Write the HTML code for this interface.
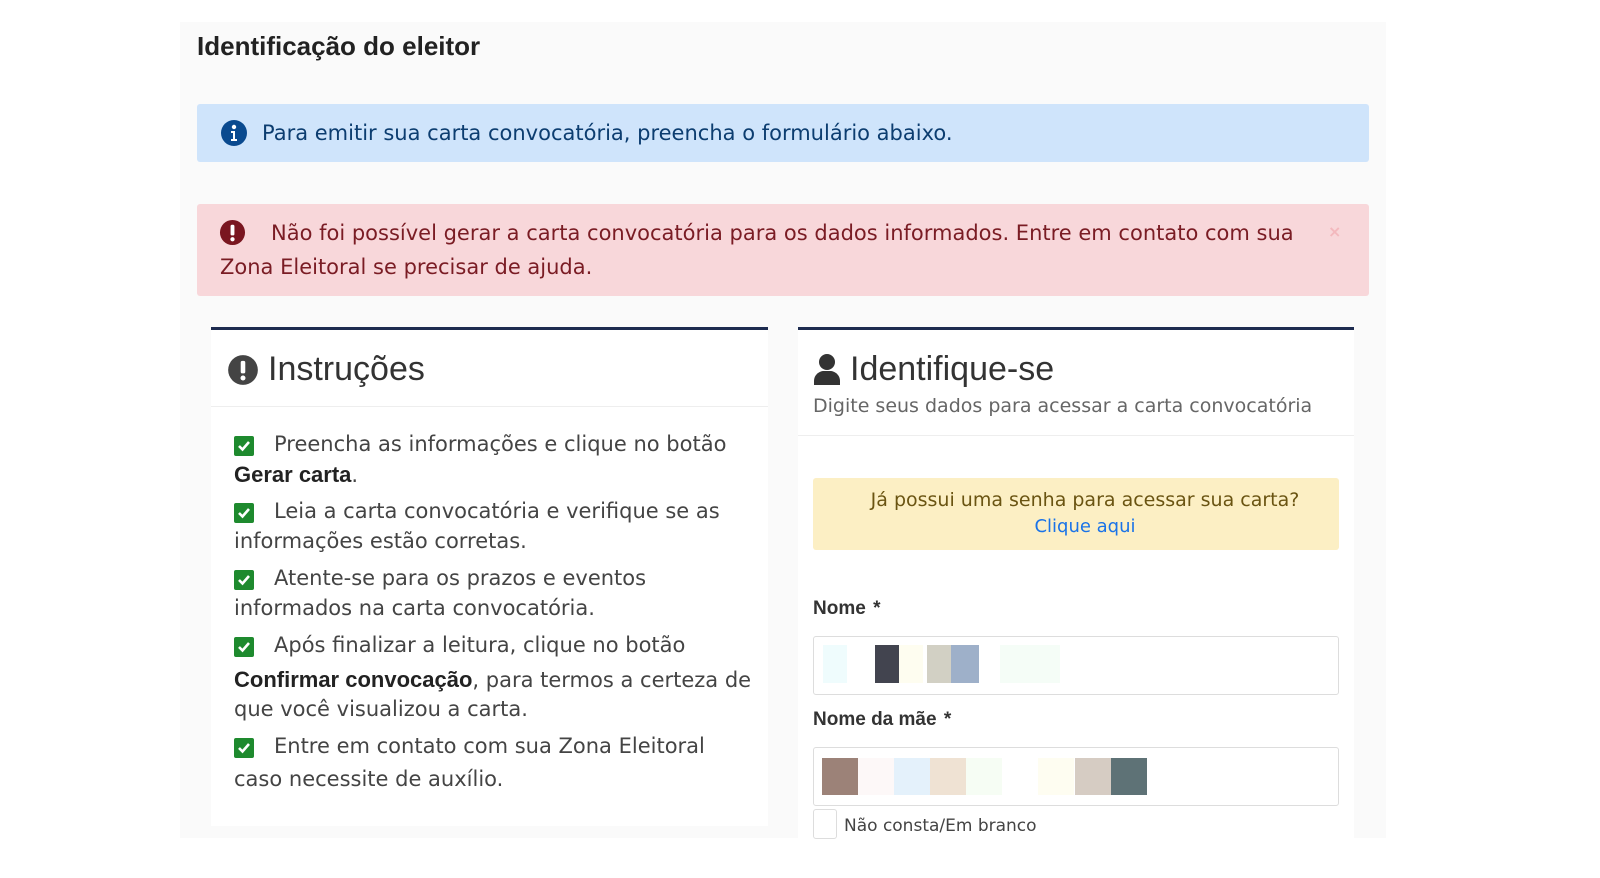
<!DOCTYPE html>
<html><head><meta charset="utf-8"><style>
*{margin:0;padding:0;box-sizing:border-box}
body{width:1600px;height:878px;background:#fff;font-family:"DejaVu Sans",sans-serif;position:relative;overflow:hidden;color:#333}
.a{position:absolute;white-space:nowrap}
.wrap{position:absolute;left:180px;top:22px;width:1206px;height:816px;background:#fafafa}
.card{position:absolute;background:#fff;border-top:3px solid #1d2b4f}
.chk{position:absolute;width:20px;height:20px;background:#1e8a2e;border-radius:2px}
.chk svg{position:absolute;left:3px;top:4px}
.li{font-size:21px;color:#444}
.li b{font-family:"Liberation Sans",sans-serif;font-size:22px;color:#222}
.L{font-family:"Liberation Sans",sans-serif}
</style></head><body>
<div class="wrap"></div>
<div class="a L" style="left:197px;top:31px;font-size:26px;font-weight:bold;color:#222">Identificação do eleitor</div>
<div class="a" style="left:197px;top:104px;width:1172px;height:58px;background:#cfe4fb;border-radius:3px"></div>
<svg class="a" style="left:220px;top:119px" width="28" height="28" viewBox="0 0 28 28"><circle cx="14" cy="14" r="13" fill="#0a4a8f"/><circle cx="14" cy="8" r="2.2" fill="#fff"/><path d="M11 12h4v8h2v2h-6v-2h2v-6h-2z" fill="#fff"/></svg>
<div class="a" style="left:262px;top:121px;font-size:21px;color:#0c3d70">Para emitir sua carta convocatória, preencha o formulário abaixo.</div>
<div class="a" style="left:197px;top:204px;width:1172px;height:92px;background:#f8d7da;border-radius:3px"></div>
<svg class="a" style="left:219px;top:219px" width="27" height="27" viewBox="0 0 28 28"><circle cx="14" cy="14" r="13" fill="#7a1620"/><rect x="12" y="6" width="4" height="11" rx="1.5" fill="#fff"/><circle cx="14" cy="21" r="2.2" fill="#fff"/></svg>
<div class="a" style="left:271px;top:221px;font-size:21px;color:#7a1c24">Não foi possível gerar a carta convocatória para os dados informados. Entre em contato com sua</div>
<div class="a" style="left:220px;top:255px;font-size:21px;color:#7a1c24">Zona Eleitoral se precisar de ajuda.</div>
<div class="a" style="left:1328px;top:222px;font-size:16px;color:#f3b8bd;font-weight:bold">×</div>

<div class="card" style="left:211px;top:327px;width:557px;height:499px"></div>
<div class="a" style="left:211px;top:406px;width:557px;height:1px;background:#eee"></div>
<svg class="a" style="left:227px;top:354px" width="32" height="32" viewBox="0 0 28 28"><circle cx="14" cy="14" r="13" fill="#444"/><rect x="12" y="6" width="4" height="11" rx="1.5" fill="#fff"/><circle cx="14" cy="21" r="2.2" fill="#fff"/></svg>
<div class="a L" style="left:268px;top:350px;font-size:34px;color:#333">Instruções</div>

<div class="chk" style="left:234px;top:436px"><svg width="14" height="12" viewBox="0 0 14 12"><path d="M2 6l3.5 3.5L12 2" stroke="#fff" stroke-width="2.6" fill="none"/></svg></div>
<div class="a li" style="left:274px;top:432px">Preencha as informações e clique no botão</div>
<div class="a li" style="left:234px;top:462px"><b>Gerar carta</b>.</div>
<div class="chk" style="left:234px;top:503px"><svg width="14" height="12" viewBox="0 0 14 12"><path d="M2 6l3.5 3.5L12 2" stroke="#fff" stroke-width="2.6" fill="none"/></svg></div>
<div class="a li" style="left:274px;top:499px">Leia a carta convocatória e verifique se as</div>
<div class="a li" style="left:234px;top:529px">informações estão corretas.</div>
<div class="chk" style="left:234px;top:570px"><svg width="14" height="12" viewBox="0 0 14 12"><path d="M2 6l3.5 3.5L12 2" stroke="#fff" stroke-width="2.6" fill="none"/></svg></div>
<div class="a li" style="left:274px;top:566px">Atente-se para os prazos e eventos</div>
<div class="a li" style="left:234px;top:596px">informados na carta convocatória.</div>
<div class="chk" style="left:234px;top:637px"><svg width="14" height="12" viewBox="0 0 14 12"><path d="M2 6l3.5 3.5L12 2" stroke="#fff" stroke-width="2.6" fill="none"/></svg></div>
<div class="a li" style="left:274px;top:633px">Após finalizar a leitura, clique no botão</div>
<div class="a li" style="left:234px;top:667px"><b>Confirmar convocação</b>, para termos a certeza de</div>
<div class="a li" style="left:234px;top:697px">que você visualizou a carta.</div>
<div class="chk" style="left:234px;top:738px"><svg width="14" height="12" viewBox="0 0 14 12"><path d="M2 6l3.5 3.5L12 2" stroke="#fff" stroke-width="2.6" fill="none"/></svg></div>
<div class="a li" style="left:274px;top:734px">Entre em contato com sua Zona Eleitoral</div>
<div class="a li" style="left:234px;top:767px">caso necessite de auxílio.</div>

<div class="card" style="left:798px;top:327px;width:556px;height:520px"></div>
<div class="a" style="left:798px;top:435px;width:556px;height:1px;background:#eee"></div>
<svg class="a" style="left:812px;top:353px" width="30" height="32" viewBox="0 0 30 32"><circle cx="15" cy="9" r="8" fill="#333"/><path d="M2 32v-4c0-6 5-10 10-10h6c5 0 10 4 10 10v4z" fill="#333"/></svg>
<div class="a L" style="left:850px;top:350px;font-size:34px;color:#333">Identifique-se</div>
<div class="a" style="left:813px;top:395px;font-size:19px;color:#666">Digite seus dados para acessar a carta convocatória</div>
<div class="a" style="left:813px;top:478px;width:526px;height:72px;background:#fcefc4;border-radius:3px"></div>
<div class="a" style="left:813px;top:489px;width:544px;text-align:center;font-size:19px;color:#6a5412">Já possui uma senha para acessar sua carta?</div>
<div class="a" style="left:813px;top:516px;width:544px;text-align:center;font-size:18px;color:#1a73e8">Clique aqui</div>
<div class="a L" style="left:813px;top:598px;font-size:19px;color:#333;font-weight:bold">Nome <span style="margin-left:2px">*</span></div>
<div class="a" style="left:813px;top:636px;width:526px;height:59px;border:1px solid #ddd;border-radius:3px;background:#fff"></div>
<div class="a" style="left:823px;top:645px;width:24px;height:38px;background:#effcfd"></div>
<div class="a" style="left:875px;top:645px;width:24px;height:38px;background:#42444f"></div>
<div class="a" style="left:899px;top:645px;width:24px;height:38px;background:#fefdf0"></div>
<div class="a" style="left:927px;top:645px;width:24px;height:38px;background:#d2d0c4"></div>
<div class="a" style="left:951px;top:645px;width:28px;height:38px;background:#9eb0c9"></div>
<div class="a" style="left:1000px;top:645px;width:60px;height:38px;background:#f5fdf7"></div>
<div class="a L" style="left:813px;top:709px;font-size:19px;color:#333;font-weight:bold">Nome da mãe <span style="margin-left:2px">*</span></div>
<div class="a" style="left:813px;top:747px;width:526px;height:59px;border:1px solid #ddd;border-radius:3px;background:#fff"></div>
<div class="a" style="left:822px;top:758px;width:36px;height:37px;background:#9c8278"></div>
<div class="a" style="left:858px;top:758px;width:36px;height:37px;background:#fdf8f8"></div>
<div class="a" style="left:894px;top:758px;width:36px;height:37px;background:#e4f1fb"></div>
<div class="a" style="left:930px;top:758px;width:36px;height:37px;background:#efe2d3"></div>
<div class="a" style="left:966px;top:758px;width:36px;height:37px;background:#f6fdf4"></div>
<div class="a" style="left:1038px;top:758px;width:36px;height:37px;background:#fefdf1"></div>
<div class="a" style="left:1075px;top:758px;width:36px;height:37px;background:#d6ccc3"></div>
<div class="a" style="left:1111px;top:758px;width:36px;height:37px;background:#5e7276"></div>
<div class="a" style="left:813px;top:809px;width:24px;height:30px;border:1px solid #ddd;border-radius:3px;background:#fff"></div>
<div class="a" style="left:844px;top:816px;font-size:17px;color:#444">Não consta/Em branco</div>
</body></html>
